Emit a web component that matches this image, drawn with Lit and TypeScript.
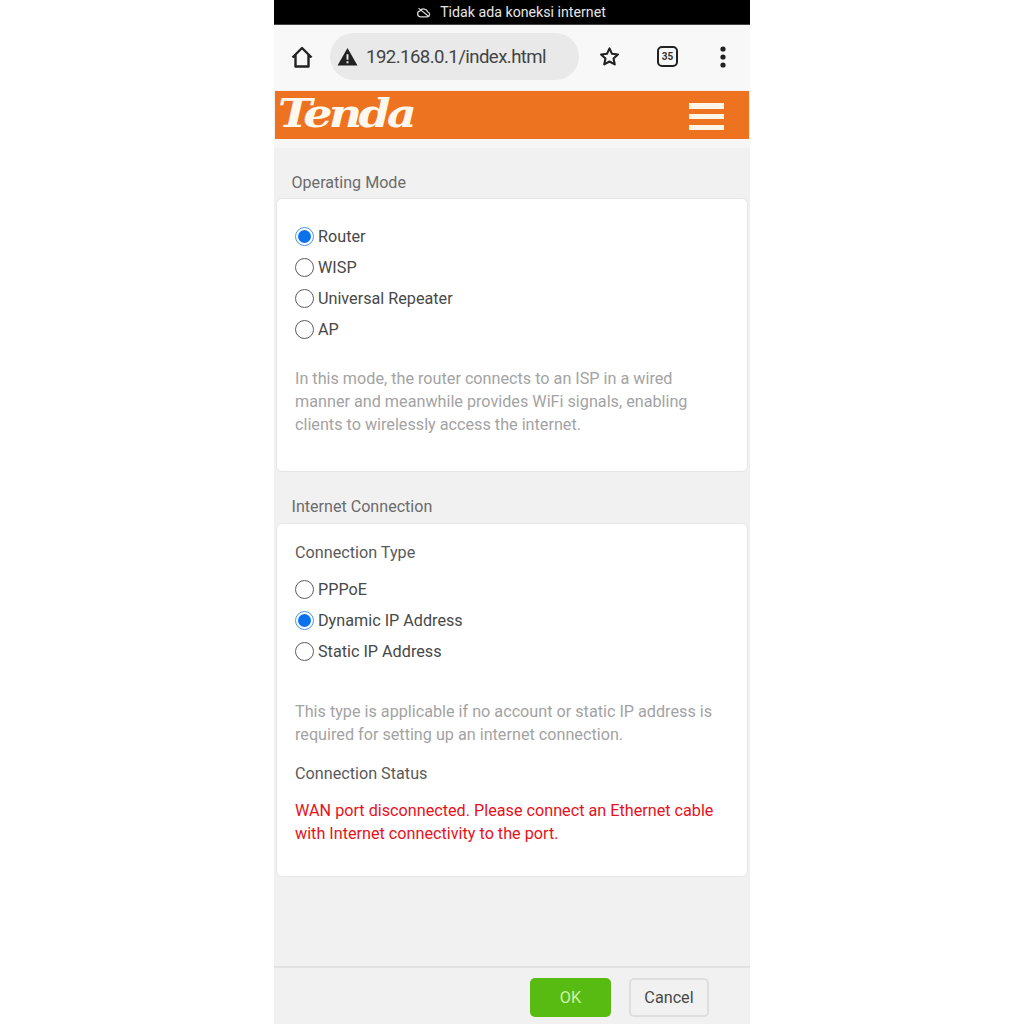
import { LitElement, html, css, svg } from 'lit';
import { customElement } from 'lit/decorators.js';

const MODES = ['Router', 'WISP', 'Universal Repeater', 'AP'];
const TYPES = ['PPPoE', 'Dynamic IP Address', 'Static IP Address'];

@customElement('app-root')
export class AppRoot extends LitElement {
  static styles = css`
    :host {
      display: block;
      background: #fff;
      font-family: Roboto, "Liberation Sans", sans-serif;
    }
    .phone {
      width: 476px;
      height: 1024px;
      margin-left: 274px;
      display: flex;
      flex-direction: column;
      background: #f1f1f1;
      overflow: hidden;
    }
    .status {
      height: 24px;
      background: #000;
      color: #e6e6e6;
      font-size: 14.2px;
      display: flex;
      align-items: center;
      justify-content: center;
      gap: 9px;
      padding-right: 2px;
      flex: none;
    }
    .toolbar {
      height: 66px;
      flex: none;
      background: #f8f8f8;
      border-top: 1px solid #444;
      box-sizing: border-box;
      padding-bottom: 2px;
      display: flex;
      align-items: center;
    }
    .home { margin-left: 17px; width: 22px; height: 22px; }
    .url {
      margin-left: 17px;
      width: 249px;
      height: 47px;
      border-radius: 23.5px;
      background: #e9e9e9;
      display: flex;
      align-items: center;
      box-sizing: border-box;
      padding-left: 7px;
      gap: 8px;
      font-size: 18.6px;
      letter-spacing: -0.56px;
      color: #444;
    }
    .url span { padding-top: 1px; }
    .star { margin-left: 19px; width: 23px; height: 23px; }
    .tabs {
      margin-left: 36px;
      width: 21px;
      height: 21px;
      border: 2.5px solid #222;
      border-radius: 5px;
      box-sizing: border-box;
      font-size: 10px;
      font-weight: 700;
      color: #333;
      display: flex;
      align-items: center;
      justify-content: center;
    }
    .more { margin-left: 41px; width: 8px; height: 22px; }
    .brand {
      margin: 1px 1px 0;
      height: 48px;
      flex: none;
      background: #ee7320;
      display: flex;
      align-items: center;
      justify-content: space-between;
      padding: 0 25px 0 3px;
    }
    .logo {
      font-family: "DejaVu Serif", serif;
      font-style: italic;
      font-weight: 700;
      font-size: 40px;
      color: #fff8ef;
      letter-spacing: -3.2px;
      line-height: 44px;
      padding-bottom: 4px;
      transform: scaleX(1.15);
      transform-origin: left center;
    }
    .burger {
      width: 35px;
      padding-top: 3px;
      display: flex;
      flex-direction: column;
      gap: 5.250px;
    }
    .burger i {
      display: block;
      height: 5.500px;
      background: #fff6ea;
    }
    .sub {
      height: 9px;
      flex: none;
      background: #f6f6f6;
    }
    .content {
      flex: 1;
      padding: 0 2px;
      display: flex;
      flex-direction: column;
    }
    .section-title {
      font-size: 16.1px;
      color: #6c6c6c;
      height: 50px;
      line-height: 70px;
      padding-left: 15.500px;
      box-sizing: border-box;
    }
    .section-title.second { height: 51px; line-height: 70px; }
    .card {
      background: #fff;
      border: 1px solid #e6e6e6;
      border-radius: 6px;
      box-sizing: border-box;
      padding: 0 18px;
    }
    .card.mode { height: 274px; padding-top: 21.5px; }
    .card.net { height: 354px; padding-top: 17px; }
    .radio-row {
      height: 31.1px;
      display: flex;
      align-items: center;
      gap: 4px;
      font-size: 16.2px;
      color: #484848;
    }
    .radio {
      width: 19px;
      height: 19px;
      box-sizing: border-box;
      border: 1.3px solid #5c5c5c;
      border-radius: 50%;
      background: #fff;
      flex: none;
    }
    .radio.on {
      border: 1.5px solid #4a94e8;
      padding: 2px;
      background: #0b72ee content-box;
    }
    .help {
      font-size: 16.2px;
      line-height: 23px;
      color: #a3a3a3;
    }
    .mode .help { margin-top: 22.3px; }
    .label { font-size: 16.2px; color: #5a5a5a; line-height: 23px; }
    .net .radio-list { margin-top: 10px; }
    .net .help { margin-top: 32.6px; }
    .status-label { margin-top: 16px; }
    .err { margin-top: 14px; font-size: 16.2px; line-height: 23px; color: #e8101a; }
    .footer {
      height: 58px;
      flex: none;
      border-top: 2px solid #e2e2e2;
      box-sizing: border-box;
      display: flex;
      align-items: flex-start;
      justify-content: flex-end;
      gap: 18px;
      padding: 10px 41px 0 0;
    }
    .btn {
      height: 39px;
      border-radius: 5px;
      box-sizing: border-box;
      font-size: 16.2px;
      display: flex;
      align-items: center;
      justify-content: center;
    }
    .ok { width: 81px; background: #58bb12; color: #cdf3ae; }
    .cancel { width: 80px; background: #f1f1f1; border: 2px solid #dedede; color: #484848; }
  `;

  private radios(items: string[], selected: string) {
    return items.map(
      (t) => html`<div class="radio-row"><span class="radio ${t === selected ? 'on' : ''}"></span>${t}</div>`,
    );
  }

  render() {
    return html`
      <div class="phone">
        <div class="status">
          <svg width="15" height="15" viewBox="0 0 24 24" fill="none" stroke="#ddd" stroke-width="2">
            ${svg`<path d="M7 19h11a4 4 0 0 0 1-7.8A7 7 0 0 0 6.500 9.500 4.800 4.800 0 0 0 7 19z"/><path d="M4 5l16 13"/>`}
          </svg>
          <span>Tidak ada koneksi internet</span>
        </div>
        <div class="toolbar">
          <svg class="home" viewBox="0 0 22 22" fill="none" stroke="#222" stroke-width="2.400" stroke-linejoin="round">
            <path d="M1.500 11.500 11 2l9.500 9.500M4.500 9v11.500h13V9"/>
          </svg>
          <div class="url">
            <svg width="21" height="19" viewBox="0 0 22 20">
              <path d="M11 1 21.500 19.500H.5z" fill="#222"/>
              <path d="M10 7.500h2v6h-2zM10 15h2v2h-2z" fill="#eee"/>
            </svg>
            <span>192.168.0.1/index.html</span>
          </div>
          <svg class="star" viewBox="0 0 24 24" fill="none" stroke="#222" stroke-width="2.200" stroke-linejoin="round">
            <path d="M12 3.500l2.600 5.700 6.200.7-4.600 4.200 1.300 6.100L12 17.200l-5.500 3 1.300-6.100L3.200 9.900l6.200-.7z"/>
          </svg>
          <div class="tabs">35</div>
          <svg class="more" viewBox="0 0 8 22" fill="#222">
            <circle cx="4" cy="3" r="2.600"/><circle cx="4" cy="11" r="2.600"/><circle cx="4" cy="19" r="2.600"/>
          </svg>
        </div>
        <div class="brand">
          <span class="logo">Tenda</span>
          <div class="burger"><i></i><i></i><i></i></div>
        </div>
        <div class="sub"></div>
        <div class="content">
          <div class="section-title">Operating Mode</div>
          <div class="card mode">
            ${this.radios(MODES, 'Router')}
            <div class="help">In this mode, the router connects to an ISP in a wired<br />manner and meanwhile provides WiFi signals, enabling<br />clients to wirelessly access the internet.</div>
          </div>
          <div class="section-title second">Internet Connection</div>
          <div class="card net">
            <div class="label">Connection Type</div>
            <div class="radio-list">${this.radios(TYPES, 'Dynamic IP Address')}</div>
            <div class="help">This type is applicable if no account or static IP address is<br />required for setting up an internet connection.</div>
            <div class="label status-label">Connection Status</div>
            <div class="err">WAN port disconnected. Please connect an Ethernet cable<br />with Internet connectivity to the port.</div>
          </div>
        </div>
        <div class="footer">
          <div class="btn ok">OK</div>
          <div class="btn cancel">Cancel</div>
        </div>
      </div>
    `;
  }
}
